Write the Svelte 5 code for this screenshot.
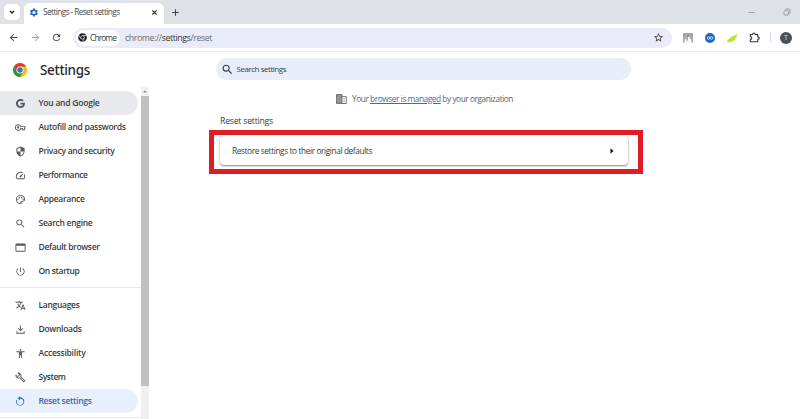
<script>
  const primary = [
    { label: 'You and Google', icon: 'google', w: 61, hover: true },
    { label: 'Autofill and passwords', icon: 'key', w: 87 },
    { label: 'Privacy and security', icon: 'shield', w: 76 },
    { label: 'Performance', icon: 'speed', w: 49 },
    { label: 'Appearance', icon: 'palette', w: 46 },
    { label: 'Search engine', icon: 'search', w: 54 },
    { label: 'Default browser', icon: 'browser', w: 61 },
    { label: 'On startup', icon: 'power', w: 41 },
  ];
  const secondary = [
    { label: 'Languages', icon: 'translate', w: 41 },
    { label: 'Downloads', icon: 'download', w: 43 },
    { label: 'Accessibility', icon: 'accessibility', w: 47 },
    { label: 'System', icon: 'wrench', w: 27 },
    { label: 'Reset settings', icon: 'reset', w: 53, selected: true },
  ];
  const paths = {
    google: 'M21.6 10.2H12v4h5.4c-.8 2.3-2.8 3.6-5.4 3.6a5.8 5.8 0 1 1 3.9-10.1l3-3A10 10 0 1 0 12 22c5.800 0 9.800-4 9.800-9.800 0-.7-.1-1.300-.2-2z',
    key: 'M7 5a7 7 0 1 0 6.300 10H15v3h7v-4h1V9H13.300A7 7 0 0 0 7 5zm0 2a5 5 0 0 1 4.800 4H21v1h-1v4h-3v-3h-5.200A5 5 0 1 1 7 7zm0 2.500a2.500 2.500 0 1 0 0 5 2.500 2.500 0 0 0 0-5z',
    shield: 'M12 1 3 5v6c0 5.550 3.840 10.740 9 12 5.160-1.260 9-6.450 9-12V5l-9-4zm0 10.990h7c-.53 4.120-3.280 7.790-7 8.940V12H5V6.300l7-3.110v8.800z',
    speed: 'M20.380 8.570l-1.230 1.850a8 8 0 0 1-.22 7.580H5.070A8 8 0 0 1 15.580 6.850l1.850-1.230A10 10 0 0 0 3.350 19a2 2 0 0 0 1.720 1h13.850a2 2 0 0 0 1.740-1 10 10 0 0 0-.27-10.440zM10.590 15.410a2 2 0 0 0 2.830 0l5.660-8.490-8.490 5.660a2 2 0 0 0 0 2.830z',
    palette: 'M12 2a10 10 0 0 0 0 20 2.500 2.500 0 0 0 1.800-4.100c-.3-.4-.2-.9.4-.9H16a6 6 0 0 0 6-6c0-5-4.500-9-10-9zm4 13h-1.800c-2.200 0-3.400 2.400-2.200 4.200V20a8 8 0 1 1 0-16c4.400 0 8 3.100 8 7a4 4 0 0 1-4 4zM6.500 10a1.500 1.500 0 1 0 0 3 1.500 1.500 0 0 0 0-3zm3-4a1.500 1.500 0 1 0 0 3 1.500 1.500 0 0 0 0-3zm5 0a1.500 1.500 0 1 0 0 3 1.500 1.500 0 0 0 0-3zm3 4a1.500 1.500 0 1 0 0 3 1.500 1.500 0 0 0 0-3z',
    search: 'M15.500 14h-.79l-.28-.27A6.470 6.470 0 0 0 16 9.500 6.500 6.500 0 1 0 9.500 16c1.610 0 3.090-.59 4.230-1.570l.27.28v.79l5 4.990L20.490 19l-4.990-5zm-6 0a4.500 4.500 0 1 1 0-9 4.500 4.500 0 0 1 0 9z',
    browser: 'M3 3a2 2 0 0 0-2 2v14c0 1.100.9 2 2 2h18a2 2 0 0 0 2-2V5a2 2 0 0 0-2-2H3zm0 5h18v11H3V8z',
    power: 'M13 3h-2v10h2V3zm4.830 2.170-1.420 1.420A7 7 0 1 1 7.580 6.580L6.170 5.170a9 9 0 1 0 11.660 0z',
    translate: 'M12.870 15.070l-2.540-2.510.03-.03A17.500 17.500 0 0 0 14.070 6H17V4h-7V2H8v2H1v1.990h11.170A15.700 15.700 0 0 1 9 11.350 15.600 15.600 0 0 1 6.690 8h-2a17.600 17.600 0 0 0 2.980 4.560l-5.090 5.020L4 19l5-5 3.110 3.110.76-2.040zM18.500 10h-2L12 22h2l1.120-3h4.750L21 22h2l-4.500-12zm-2.620 7 1.620-4.330L19.120 17h-3.240z',
    download: 'M11 3h2v9.200l3.600-3.600L18 10l-6 6-6-6 1.400-1.400 3.600 3.600V3zM3 16h2v3h14v-3h2v5H3z',
    accessibility: 'M12 2a2 2 0 1 1 0 4 2 2 0 0 1 0-4zm9 7h-6v13h-2v-6h-2v6H9V9H3V7h18v2z',
    wrench: 'M22.600 19l-9-9a6.500 6.500 0 0 0-1.500-7C10.200 1 7.300.6 4.900 1.700l4.200 4.200-3.200 3.200L1.600 4.900a6.600 6.600 0 0 0 1.400 7.300 6.500 6.500 0 0 0 7 1.500l9 9 3.600-3.700zM19 20.200l-8.600-8.600c-2 1.200-4.500 1-6.100-.7a4.400 4.400 0 0 1-1.300-3L6 11.500 11.700 6 8.400 3a4.500 4.500 0 0 1 2.600 7.200l9 9-1 1z',
    reset: 'M11 3V0L6 5l5 5V6a7 7 0 1 1-6 4L3 8.500A9 9 0 1 0 11 3z',
    star: 'M22 9.240l-7.190-.62L12 2 9.190 8.630 2 9.240l5.460 4.730L5.820 21 12 17.270 18.180 21l-1.630-7.030L22 9.240zM12 15.400l-3.760 2.270 1-4.280-3.320-2.880 4.380-.38L12 6.100l1.710 4.040 4.380.38-3.320 2.880 1 4.280L12 15.400z',
    back: 'M20 11H7.830l5.590-5.590L12 4l-8 8 8 8 1.410-1.410L7.830 13H20v-2z',
    reload: 'M17.650 6.350A8 8 0 1 0 19.730 14h-2.080A6 6 0 1 1 16.200 7.800L13 11h7V4l-2.350 2.350z',
    gear: 'M19.400 13c.1-.7.1-1.300 0-2l2.100-1.600-2-3.500-2.500 1-1.700-1L15 3.200h-4l-.5 2.700-1.700 1-2.500-1-2 3.500L6.400 11c-.1.700-.1 1.300 0 2l-2.100 1.600 2 3.500 2.500-1 1.700 1 .5 2.700h4l.4-2.700 1.700-1 2.500 1 2-3.500-2.200-1.600zM13 15.500a3.500 3.500 0 1 1 0-7 3.500 3.500 0 0 1 0 7z',
  };

  // Evens out tracking so a label occupies its designed width.
  function fit(node, width) {
    const natural = node.getBoundingClientRect().width;
    node.style.letterSpacing = `${(width - natural) / node.textContent.length}px`;
  }
</script>

{#snippet icon(name, size = 12)}
  <svg class="icon" width={size} height={size} viewBox="0 0 24 24" fill="currentColor" fill-rule="evenodd"><path d={paths[name]} /></svg>
{/snippet}

{#snippet nav(items)}
  {#each items as item}
    <a class="item" class:hover={item.hover} class:selected={item.selected}>
      {@render icon(item.icon, 11)}<span use:fit={item.w}>{item.label}</span>
    </a>
  {/each}
{/snippet}

<div class="window">
  <div class="tabs">
    <button class="chevron" aria-label="Search tabs"><svg width="8" height="8" viewBox="0 0 8 8"><path d="M2 3l2 2 2-2" fill="none" stroke="#222" stroke-width="1.300" /></svg></button>
    <div class="tab">
      <span class="gear">{@render icon('gear', 11)}</span>
      <span class="title"><span use:fit={76.5}>Settings - Reset settings</span></span>
      <svg width="7" height="7" viewBox="0 0 7 7"><path d="M1.300 1.300l4.400 4.400M5.700 1.300L1.300 5.700" stroke="#222" stroke-width="1.100" /></svg>
    </div>
    <svg class="plus" width="9" height="9" viewBox="0 0 9 9"><path d="M4.500 1.200v6.600M1.200 4.500h6.600" stroke="#444" stroke-width="1.100" /></svg>
    <div class="controls">
      <svg width="7" height="7" viewBox="0 0 7 7"><path d="M.5 3.500h6" stroke="#999" /></svg>
      <svg width="8" height="8" viewBox="0 0 8 8" fill="none" stroke="#8b8e93" stroke-width=".8"><rect x="1" y="2.600" width="4.400" height="4.400" rx=".8" /><path d="M2.700 2.400V1.600Q2.700 1 3.500 1H6Q7 1 7 2v2.600q0 .8-.8.8h-.6" /></svg>
    </div>
  </div>

  <div class="toolbar">
    <div class="history">
      {@render icon('back', 11)}
      <span class="forward">{@render icon('back', 11)}</span>
      {@render icon('reload', 11)}
    </div>
    <div class="omnibox">
      <div class="chip">
        <svg width="9" height="9" viewBox="0 0 24 24"><circle cx="12" cy="12" r="11.500" fill="#1d1f22" /><path d="M12 6.500h10M7.300 14.800L2.500 6.200M16.800 14.800L12 23" stroke="#fff" stroke-width="1.800" /><circle cx="12" cy="12" r="5.500" fill="#fff" /><circle cx="12" cy="12" r="3.700" fill="#1d1f22" /></svg>
        <span use:fit={26}>Chrome</span>
      </div>
      <span class="url"><span use:fit={87}>chrome://<b>settings</b>/reset</span></span>
      {@render icon('star', 11)}
    </div>
    <div class="extensions">
      <svg width="10" height="10" viewBox="0 0 10 10"><path d="M0 0h10v9.500H0z" fill="#a7a7a7" /><path d="M1.600 10V6.500l1.700-1.200V2.500Q5 .7 6.700 2.500v2.700L8.400 6.500V10z" fill="#f5f5f5" /><path d="M3.500 2q1.500-1 3 0v1L4.700 4.500v3H3.500z" fill="#898989" /></svg>
      <svg width="10" height="10" viewBox="0 0 10 10"><circle cx="5" cy="5" r="5" fill="#1769c7" /><g fill="none" stroke="#d3edff" stroke-width=".9"><circle cx="3.500" cy="5" r="1.300" /><circle cx="6.500" cy="5" r="1.300" /></g></svg>
      <svg width="10" height="10" viewBox="0 0 10 10" fill="#b2e62b"><path d="M.2 9.800L.6 7.200 2.800 5.200 3 9zM3.200 8.600V4.500L5.600 2.800 6 8.200zM6.300 7.700V2.400L8.200 2.800 7.900 6.700zM8.300 2.200L9.900 0 9.500 4.600 8.400 6z" /><path d="M.5 7.500L8.500 2.500 8.400 6.500 3 8.800z" /></svg>
      <svg width="11" height="11" viewBox="0 0 11 11"><path d="M1.300 2.500h2.400Q3.700 1 5 1t1.300 1.500h2.500v2.400q1.400 0 1.400 1.200T8.800 7.300V9.800H1.300V7.400q1.500 0 1.500-1.300T1.300 4.800z" fill="none" stroke="#33373b" stroke-width="1.100" stroke-linejoin="round" /></svg>
      <i></i>
      <span class="avatar">T</span>
    </div>
  </div>

  <div class="page">
    <aside>
      <header>
        <svg width="14" height="14" viewBox="0 0 28 28"><circle cx="14" cy="14" r="14" fill="#fbbc04" /><path d="M1.900 7A14 14 0 0 0 14 28l6-10.500L8 17.500z" fill="#23944a" /><path d="M14 7h12.100A14 14 0 0 0 1.900 7L8 17.500z" fill="#dc3b2f" /><circle cx="14" cy="14" r="7" fill="#fff" /><circle cx="14" cy="14" r="5.500" fill="#3972d0" /></svg>
        <h1><span use:fit={50}>Settings</span></h1>
      </header>
      <div class="scroller">
        <nav>
          {@render nav(primary)}
          <hr />
          {@render nav(secondary)}
          <hr class="last" />
        </nav>
        <div class="scrollbar">
          <div class="up"><svg width="4" height="3" viewBox="0 0 4 3"><path d="M0 2.500L2 .5l2 2z" fill="#888" /></svg></div>
          <div class="thumb"></div>
        </div>
      </div>
    </aside>

    <main>
      <div class="search">{@render icon('search', 13)}<span use:fit={49.5}>Search settings</span></div>
      <div class="managed">
        <svg width="11" height="10" viewBox="0 0 11 10"><path d="M.5.500h5.500v9H.5z" fill="#85878a" stroke="#606367" stroke-width=".8" /><path d="M2.400.5v9M4.200.5v9M.5 3.200h5M.5 6h5" stroke="#b8b9bb" stroke-width=".4" /><path d="M6 2.600h4.300v6.900H6M7.500 4.800h1.200M7.500 6.900h1.200" fill="none" stroke="#66696c" stroke-width=".9" /></svg>
        <span use:fit={161}>Your <u>browser is managed</u> by your organization</span>
      </div>
      <h2><span use:fit={53}>Reset settings</span></h2>
      <div class="highlight">
        <div class="card">
          <span use:fit={140}>Restore settings to their original defaults</span>
          <svg width="4" height="6" viewBox="0 0 4 6"><path d="M.5.3L3.500 3 .5 5.700z" fill="#111" /></svg>
        </div>
      </div>
    </main>
  </div>
</div>

<style>
  .window { width: 800px; height: 419px; overflow: hidden; display: flex; flex-direction: column; background: #fff; color: #3a3c40; font: 8.300px/12px "Open Sans", "Noto Sans", sans-serif; white-space: nowrap; }
  .window * { box-sizing: border-box; }
  svg { display: block; flex: none; }
  .tabs { height: 24px; flex: none; display: flex; align-items: center; background: #dee1e8; padding-left: 4px; }
  .chevron { width: 16px; height: 16px; padding: 4px; border: 0; border-radius: 5px; background: #fff; }
  .tab { width: 140px; height: 21px; margin: 3px 0 0 4px; padding: 0 6px 3px 4px; border-radius: 6px 6px 0 0; display: flex; align-items: center; background: #fff; }
  .gear { color: #1768c6; }
  .title { flex: 1; margin-left: 4px; color: #4a4c50; }
  .plus { margin-left: 7px; }
  .controls { width: 52px; margin-left: auto; padding-right: 9px; display: flex; justify-content: space-between; align-items: center; }
  .toolbar { height: 28px; flex: none; display: flex; align-items: center; border-bottom: 1px solid #e9eaec; }
  .history { width: 73px; padding-left: 8px; display: flex; gap: 10.500px; color: #414449; }
  .forward { transform: scaleX(-1); color: #a5a6a8; }
  .omnibox { width: 599px; height: 20px; border-radius: 10px; padding: 0 8px 0 3px; display: flex; align-items: center; background: #e9ecf8; }
  .chip { width: 44px; height: 16px; border-radius: 8px; padding-left: 2px; display: flex; align-items: center; gap: 3px; background: #fff; }
  .url { flex: 1; margin-left: 5px; font-size: 8.800px; color: #696c73; }
  .url b { font-weight: 400; color: #33363b; }
  .extensions { display: flex; align-items: center; padding-left: 11px; gap: 12px; }
  .extensions i { width: 1px; height: 9px; margin-left: -2px; background: #cfd5e4; }
  .avatar { width: 12px; height: 12px; margin-left: -3px; border-radius: 50%; background: #42545f; color: #e0e6e9; font-size: 7px; text-align: center; }
  .page { flex: 1; display: flex; min-height: 0; }
  aside { width: 150px; flex: none; display: flex; flex-direction: column; }
  header { height: 35px; flex: none; padding-left: 13px; display: flex; align-items: center; gap: 13px; }
  h1 { margin: 1px 0 0; font-size: 13.500px; line-height: 16px; font-weight: 500; color: #292b2e; font-family: "Noto Sans", sans-serif; }
  .scroller { flex: 1; min-height: 0; display: flex; overflow: hidden; }
  nav { width: 141px; padding-top: 4px; }
  .item { width: 138px; height: 24px; padding-left: 15px; display: flex; align-items: center; gap: 12.500px; border-radius: 0 12px 12px 0; font: 600 8.500px/12px "Open Sans", sans-serif; }
  .item span { margin-top: -1px; }
  .item :global(.icon) { color: #54575c; }
  .hover { background: #e8e9ed; }
  .item.selected { background: #e8effd; color: #4169ad; }
  .item.selected :global(.icon) { color: #3272d5; }
  hr { border: 0; height: 1px; background: #e6e7e9; margin: 4px 0 5px; }
  .last { margin: 4px 0 0; }
  .scrollbar { width: 8px; background: #f0f0f1; }
  .up { height: 9px; display: flex; align-items: center; justify-content: center; }
  .thumb { height: 290px; background: #c1c1c1; }
  main { width: 493px; padding: 6px 0 0 59px; display: flex; flex-direction: column; }
  .search { width: 415px; height: 22px; margin-left: 7px; padding-left: 5px; border-radius: 11px; display: flex; align-items: center; gap: 2.500px; font-size: 8px; background: #e9edf9; }
  .managed { margin: 13px 0 0 127px; height: 12px; display: flex; align-items: center; gap: 5px; color: #606368; }
  u { color: #346fb2; text-decoration-thickness: 1px; text-underline-offset: 1px; }
  h2 { margin: 10px 0 3px 11px; height: 12px; font: 8.700px/12px "Open Sans", sans-serif; }
  .highlight { width: 434px; height: 44px; padding: 1px 10px 4px 6px; border: 5px solid #df1d27; }
  .card { height: 29px; padding: 0 14px 0 12px; display: flex; align-items: center; justify-content: space-between; border-radius: 4px; box-shadow: 0 1px 2px rgba(50,50,50,.55), 0 0 2px rgba(60,60,60,.15); }
</style>
